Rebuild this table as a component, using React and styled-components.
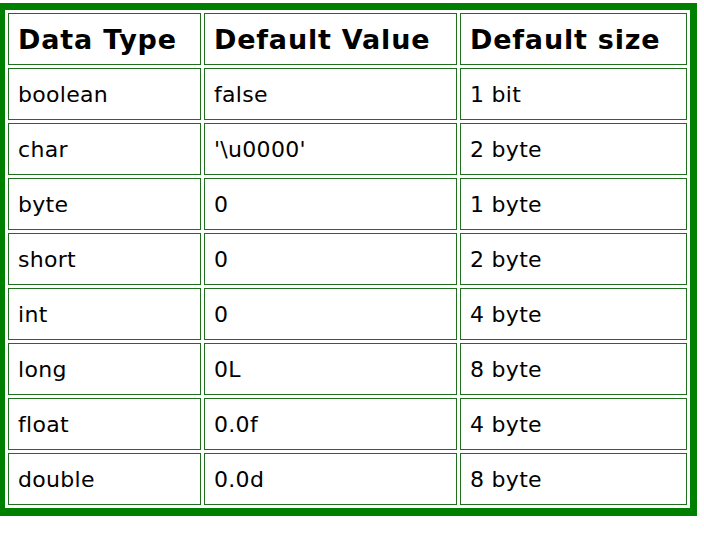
import React from "react";
import styled, { createGlobalStyle } from "styled-components";

const Global = createGlobalStyle`
  html, body { margin: 0; padding: 0; background: #ffffff; }
  body { font-family: "DejaVu Sans", Verdana, sans-serif; color: #000; }
`;

const Table = styled.table`
  margin: 3px 0 0 -2px;
  border: 7px solid #008000;
  border-bottom-width: 8px;
  border-collapse: separate;
  border-spacing: 3px;
  table-layout: fixed;
`;

const Cell = styled.td`
  box-sizing: border-box;
  width: ${(p) => p.$w}px;
  height: 52px;
  border: 1px solid #1f6f1f;
  padding: 0 8px 0 9px;
  vertical-align: middle;
  text-align: left;
  font-size: 22px;
  letter-spacing: 0.3px;
  font-weight: normal;
  white-space: nowrap;
`;

const Head = styled(Cell).attrs({ as: "th" })`
  font-size: 27px;
  letter-spacing: 0.8px;
  font-weight: bold;
`;

const widths = [193, 253, 227];
const headers = ["Data Type", "Default Value", "Default size"];
const rows = [
  ["boolean", "false", "1 bit"],
  ["char", "'\\u0000'", "2 byte"],
  ["byte", "0", "1 byte"],
  ["short", "0", "2 byte"],
  ["int", "0", "4 byte"],
  ["long", "0L", "8 byte"],
  ["float", "0.0f", "4 byte"],
  ["double", "0.0d", "8 byte"],
];

export default function App() {
  return (
    <>
      <Global />
      <Table>
        <tbody>
          <tr>
            {headers.map((h, i) => (
              <Head key={h} $w={widths[i]}>
                {h}
              </Head>
            ))}
          </tr>
          {rows.map((r) => (
            <tr key={r[0]}>
              {r.map((c, i) => (
                <Cell key={i} $w={widths[i]}>
                  {c}
                </Cell>
              ))}
            </tr>
          ))}
        </tbody>
      </Table>
    </>
  );
}
